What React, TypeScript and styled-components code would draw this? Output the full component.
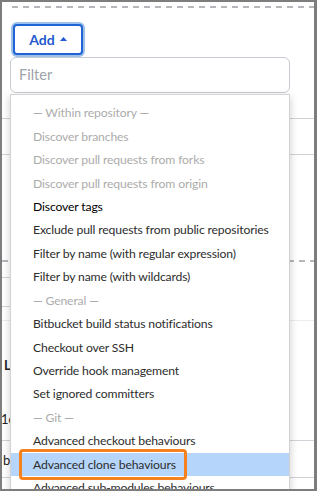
import React from "react";
import styled, { createGlobalStyle } from "styled-components";

const Global = createGlobalStyle`
  html, body { margin: 0; padding: 0; background: #ffffff; }
  body { font-family: Lato, "Open Sans", sans-serif; }
`;

const Frame = styled.div`
  position: relative;
  width: 317px;
  height: 491px;
  box-sizing: border-box;
  border: 2px solid #7d7d7d;
  border-right-width: 3px;
  background: #ffffff;
  overflow: hidden;
`;

const Background = styled.div`
  display: flex;
  flex-direction: column;
`;

const DashRule = styled.div<{ $top: number; $left?: number }>`
  margin-top: ${(p) => p.$top}px;
  margin-left: ${(p) => p.$left ?? 0}px;
  height: 2px;
  background: repeating-linear-gradient(to right, #b4b8bc 0 6px, transparent 6px 11px);
`;

const Rule = styled.div<{ $top: number; $right?: number; $color?: string }>`
  margin-top: ${(p) => p.$top}px;
  margin-right: ${(p) => p.$right ?? 0}px;
  height: 1px;
  background: ${(p) => p.$color ?? "#cfd3d7"};
`;

const AddButton = styled.button`
  margin: 16px 0 0 11px;
  width: 70px;
  height: 31px;
  box-sizing: border-box;
  display: flex;
  align-items: center;
  justify-content: center;
  gap: 5px;
  padding: 0 0 1px 0;
  border: 2px solid #1f63d4;
  border-radius: 4px;
  box-shadow: 0 0 0 2px #9cc0ea;
  background: #ffffff;
  color: #2459cf;
  font-family: Lato, "Open Sans", sans-serif;
  font-weight: 700;
  font-size: 14px;
`;

const Fragment = styled.div<{ $top: number; $left: number; $bold?: boolean }>`
  margin-top: ${(p) => p.$top}px;
  margin-left: ${(p) => p.$left}px;
  height: 16px;
  line-height: 16px;
  font-size: 13px;
  font-weight: ${(p) => (p.$bold ? 700 : 400)};
  color: #222;
`;

const Dropdown = styled.div`
  position: absolute;
  left: 8px;
  top: 55px;
  width: 280px;
  display: flex;
  flex-direction: column;
`;

const FilterInput = styled.input`
  box-sizing: border-box;
  width: 280px;
  height: 36px;
  border: 1px solid #c6ccd2;
  border-radius: 6px;
  padding: 0 0 2px 8px;
  font-family: Lato, "Open Sans", sans-serif;
  font-size: 14.5px;
  color: #333;
  background: #fff;
  outline: none;
  &::placeholder { color: #9ea3a8; }
`;

const List = styled.ul`
  list-style: none;
  margin: 1px 0 0 0;
  padding: 6px 0 0 0;
  height: 420px;
  box-sizing: border-box;
  border: 1px solid #d3d3d3;
  border-bottom: none;
  background: #ffffff;
  box-shadow: 0 3px 8px rgba(0, 0, 0, 0.2);
`;

const Item = styled.li<{ $kind: "header" | "disabled" | "normal" | "strong"; $active?: boolean }>`
  display: flex;
  align-items: center;
  height: 23.45px;
  padding-left: 22px;
  font-size: 12.2px;
  letter-spacing: -0.15px;
  white-space: nowrap;
  background: ${(p) => (p.$active ? "#b6d5fa" : "transparent")};
  color: ${(p) =>
    p.$kind === "header" || p.$kind === "disabled"
      ? "#acacac"
      : p.$kind === "strong"
      ? "#000000"
      : "#2d2d2d"};
`;

const Callout = styled.span`
  flex: none;
  box-sizing: border-box;
  height: 31px;
  margin-left: -14px;
  padding: 0 8px 0 11px;
  line-height: 25px;
  border: 3px solid #f5821f;
  border-radius: 4px;
`;

type Entry = { label: string; kind: "header" | "disabled" | "normal" | "strong"; active?: boolean };

const entries: Entry[] = [
  { label: "— Within repository —", kind: "header" },
  { label: "Discover branches", kind: "disabled" },
  { label: "Discover pull requests from forks", kind: "disabled" },
  { label: "Discover pull requests from origin", kind: "disabled" },
  { label: "Discover tags", kind: "strong" },
  { label: "Exclude pull requests from public repositories", kind: "normal" },
  { label: "Filter by name (with regular expression)", kind: "normal" },
  { label: "Filter by name (with wildcards)", kind: "normal" },
  { label: "— General —", kind: "header" },
  { label: "Bitbucket build status notifications", kind: "normal" },
  { label: "Checkout over SSH", kind: "normal" },
  { label: "Override hook management", kind: "normal" },
  { label: "Set ignored committers", kind: "normal" },
  { label: "— Git —", kind: "header" },
  { label: "Advanced checkout behaviours", kind: "normal" },
  { label: "Advanced clone behaviours", kind: "normal", active: true },
  { label: "Advanced sub-modules behaviours", kind: "normal" },
];

export default function App() {
  return (
    <>
      <Global />
      <Frame>
        <Background>
          <DashRule $top={4} $left={10} />
          <AddButton>
            Add
            <svg width="7" height="4" viewBox="0 0 7 4">
              <path d="M0 4 L3.5 0 L7 4 Z" fill="#2459cf" />
            </svg>
          </AddButton>
          <Rule $top={63} />
          <Rule $top={35} />
          <DashRule $top={105} />
          <Rule $top={15} $right={40} />
          <Rule $top={28} $right={40} />
          <Rule $top={13} $color="#ececec" />
          <Fragment $top={36} $left={2} $bold>
            L
          </Fragment>
          <Fragment $top={38} $left={-1}>
            1c
          </Fragment>
          <Rule $top={13} />
          <Fragment $top={11} $left={1}>
            b
          </Fragment>
          <Rule $top={9} />
        </Background>
        <Dropdown>
          <FilterInput placeholder="Filter" readOnly />
          <List>
            {entries.map((e) => (
              <Item key={e.label} $kind={e.kind} $active={e.active}>
                {e.active ? <Callout>{e.label}</Callout> : e.label}
              </Item>
            ))}
          </List>
        </Dropdown>
      </Frame>
    </>
  );
}
